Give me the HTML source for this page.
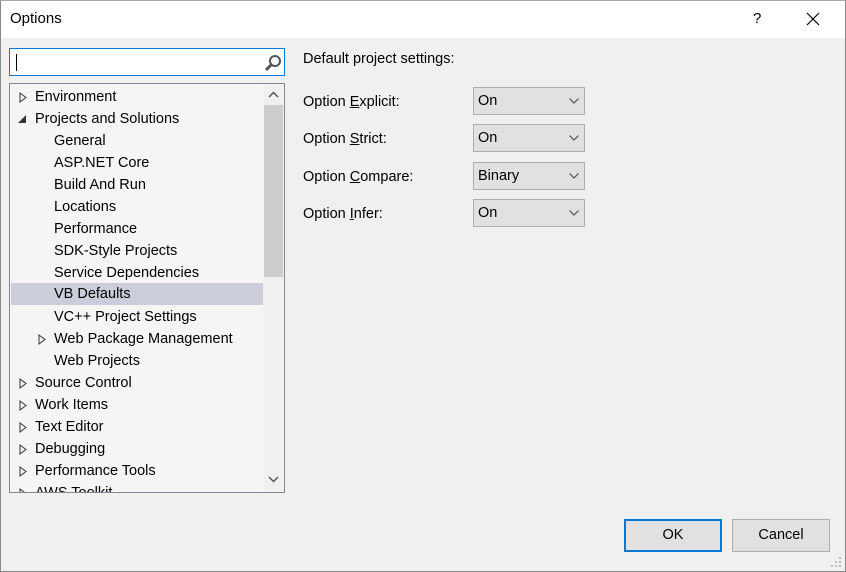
<!DOCTYPE html>
<html><head><style>
*{margin:0;padding:0;box-sizing:border-box}
body{width:846px;height:572px;background:#f0f0f0;font-family:"Liberation Sans",sans-serif;font-size:14.5px;color:#000;position:relative;overflow:hidden}
.frame{position:absolute;left:0;top:0;width:846px;height:572px;border:1px solid #888;border-top:1px solid #aaa;pointer-events:none}
.title{position:absolute;left:1px;top:1px;width:844px;height:37px;background:#fff}
.abs{position:absolute}
.search{left:9px;top:48px;width:276px;height:28px;background:#fff;border:1px solid #0078d7}
.tree{left:9px;top:83px;width:276px;height:410px;background:#f5f5f5;border:1px solid #828790;overflow:hidden}
.row{position:absolute;left:0;height:22px;line-height:22px;white-space:nowrap;width:252px}
.sb{position:absolute;left:253px;top:0;width:21px;height:408px;background:#f0f0f0}
.thumb{position:absolute;left:1px;top:21px;width:19px;height:172px;background:#cdcdcd}
.combo{position:absolute;left:473px;width:112px;height:28px;background:#e1e1e1;border:1px solid #adadad;line-height:26px;padding-left:4px}
.combo svg{position:absolute;right:5px;top:10px}
.lbl{position:absolute;left:303px;line-height:20px}
.btn{position:absolute;top:519px;width:98px;height:33px;background:#e1e1e1;text-align:center;line-height:29px}
</style></head><body>
<div class="title"></div>
<div class="abs" style="left:10px;top:10px;font-size:15px">Options</div>
<div class="abs" style="left:753px;top:10px;font-size:15px">?</div>
<svg class="abs" style="left:806px;top:12px" width="14" height="14"><path d="M1 1L13 13M13 1L1 13" stroke="#000" stroke-width="1.2"/></svg>

<div class="abs search">
<div class="abs" style="left:6px;top:5px;width:1px;height:17px;background:#000"></div>
<svg class="abs" style="left:254px;top:5px" width="18" height="18"><circle cx="11" cy="7" r="5" fill="none" stroke="#555" stroke-width="2"/><path d="M7.5 10.5L2 16" stroke="#555" stroke-width="3"/></svg>
</div>

<div class="abs tree">
<div class="row" style="top:2px;left:0"><svg class="abs" style="left:9px;top:6px" width="8" height="11"><path d="M1 1L7 5.5L1 10Z" fill="none" stroke="#333"/></svg><span style="position:absolute;left:25px">Environment</span></div>
<div class="row" style="top:24px"><svg class="abs" style="left:8px;top:7px" width="9" height="9"><path d="M8 0L8 8L0 8Z" fill="#333"/></svg><span style="position:absolute;left:25px">Projects and Solutions</span></div>
<div class="row" style="top:46px"><span style="position:absolute;left:44px">General</span></div>
<div class="row" style="top:68px"><span style="position:absolute;left:44px">ASP.NET Core</span></div>
<div class="row" style="top:90px"><span style="position:absolute;left:44px">Build And Run</span></div>
<div class="row" style="top:112px"><span style="position:absolute;left:44px">Locations</span></div>
<div class="row" style="top:134px"><span style="position:absolute;left:44px">Performance</span></div>
<div class="row" style="top:156px"><span style="position:absolute;left:44px">SDK-Style Projects</span></div>
<div class="row" style="top:178px"><span style="position:absolute;left:44px">Service Dependencies</span></div>
<div class="row" style="top:199px;left:1px;background:#cbcdda"><span style="position:absolute;left:43px">VB Defaults</span></div>
<div class="row" style="top:222px"><span style="position:absolute;left:44px">VC++ Project Settings</span></div>
<div class="row" style="top:244px"><svg class="abs" style="left:28px;top:6px" width="8" height="11"><path d="M1 1L7 5.5L1 10Z" fill="none" stroke="#333"/></svg><span style="position:absolute;left:44px">Web Package Management</span></div>
<div class="row" style="top:266px"><span style="position:absolute;left:44px">Web Projects</span></div>
<div class="row" style="top:288px"><svg class="abs" style="left:9px;top:6px" width="8" height="11"><path d="M1 1L7 5.5L1 10Z" fill="none" stroke="#333"/></svg><span style="position:absolute;left:25px">Source Control</span></div>
<div class="row" style="top:310px"><svg class="abs" style="left:9px;top:6px" width="8" height="11"><path d="M1 1L7 5.5L1 10Z" fill="none" stroke="#333"/></svg><span style="position:absolute;left:25px">Work Items</span></div>
<div class="row" style="top:332px"><svg class="abs" style="left:9px;top:6px" width="8" height="11"><path d="M1 1L7 5.5L1 10Z" fill="none" stroke="#333"/></svg><span style="position:absolute;left:25px">Text Editor</span></div>
<div class="row" style="top:354px"><svg class="abs" style="left:9px;top:6px" width="8" height="11"><path d="M1 1L7 5.5L1 10Z" fill="none" stroke="#333"/></svg><span style="position:absolute;left:25px">Debugging</span></div>
<div class="row" style="top:376px"><svg class="abs" style="left:9px;top:6px" width="8" height="11"><path d="M1 1L7 5.5L1 10Z" fill="none" stroke="#333"/></svg><span style="position:absolute;left:25px">Performance Tools</span></div>
<div class="row" style="top:398px"><svg class="abs" style="left:9px;top:6px" width="8" height="11"><path d="M1 1L7 5.5L1 10Z" fill="none" stroke="#333"/></svg><span style="position:absolute;left:25px">AWS Toolkit</span></div>
<div class="sb"><svg class="abs" style="left:5px;top:7px" width="11" height="7"><path d="M1 6L5.5 1.5L10 6" fill="none" stroke="#555" stroke-width="1.5"/></svg><div class="thumb"></div><svg class="abs" style="left:5px;top:392px" width="11" height="7"><path d="M1 1L5.5 5.5L10 1" fill="none" stroke="#555" stroke-width="1.5"/></svg></div>
</div>

<div class="lbl" style="top:49px">Default project settings:</div>
<div class="lbl" style="top:92px">Option <u>E</u>xplicit:</div>
<div class="lbl" style="top:129px">Option <u>S</u>trict:</div>
<div class="lbl" style="top:167px">Option <u>C</u>ompare:</div>
<div class="lbl" style="top:204px">Option <u>I</u>nfer:</div>
<div class="combo" style="top:87px">On<svg width="10" height="6"><path d="M0.5 0.5L5 5L9.5 0.5" fill="none" stroke="#444"/></svg></div>
<div class="combo" style="top:124px">On<svg width="10" height="6"><path d="M0.5 0.5L5 5L9.5 0.5" fill="none" stroke="#444"/></svg></div>
<div class="combo" style="top:162px">Binary<svg width="10" height="6"><path d="M0.5 0.5L5 5L9.5 0.5" fill="none" stroke="#444"/></svg></div>
<div class="combo" style="top:199px">On<svg width="10" height="6"><path d="M0.5 0.5L5 5L9.5 0.5" fill="none" stroke="#444"/></svg></div>

<div class="btn" style="left:624px;border:2px solid #0078d7">OK</div>
<div class="btn" style="left:732px;border:1px solid #adadad;line-height:31px">Cancel</div>
<svg class="abs" style="left:831px;top:557px" width="12" height="12" fill="#bbb"><rect x="8" y="0" width="2" height="2"/><rect x="4" y="4" width="2" height="2"/><rect x="8" y="4" width="2" height="2"/><rect x="0" y="8" width="2" height="2"/><rect x="4" y="8" width="2" height="2"/><rect x="8" y="8" width="2" height="2"/></svg>
<div class="frame"></div>
</body></html>
